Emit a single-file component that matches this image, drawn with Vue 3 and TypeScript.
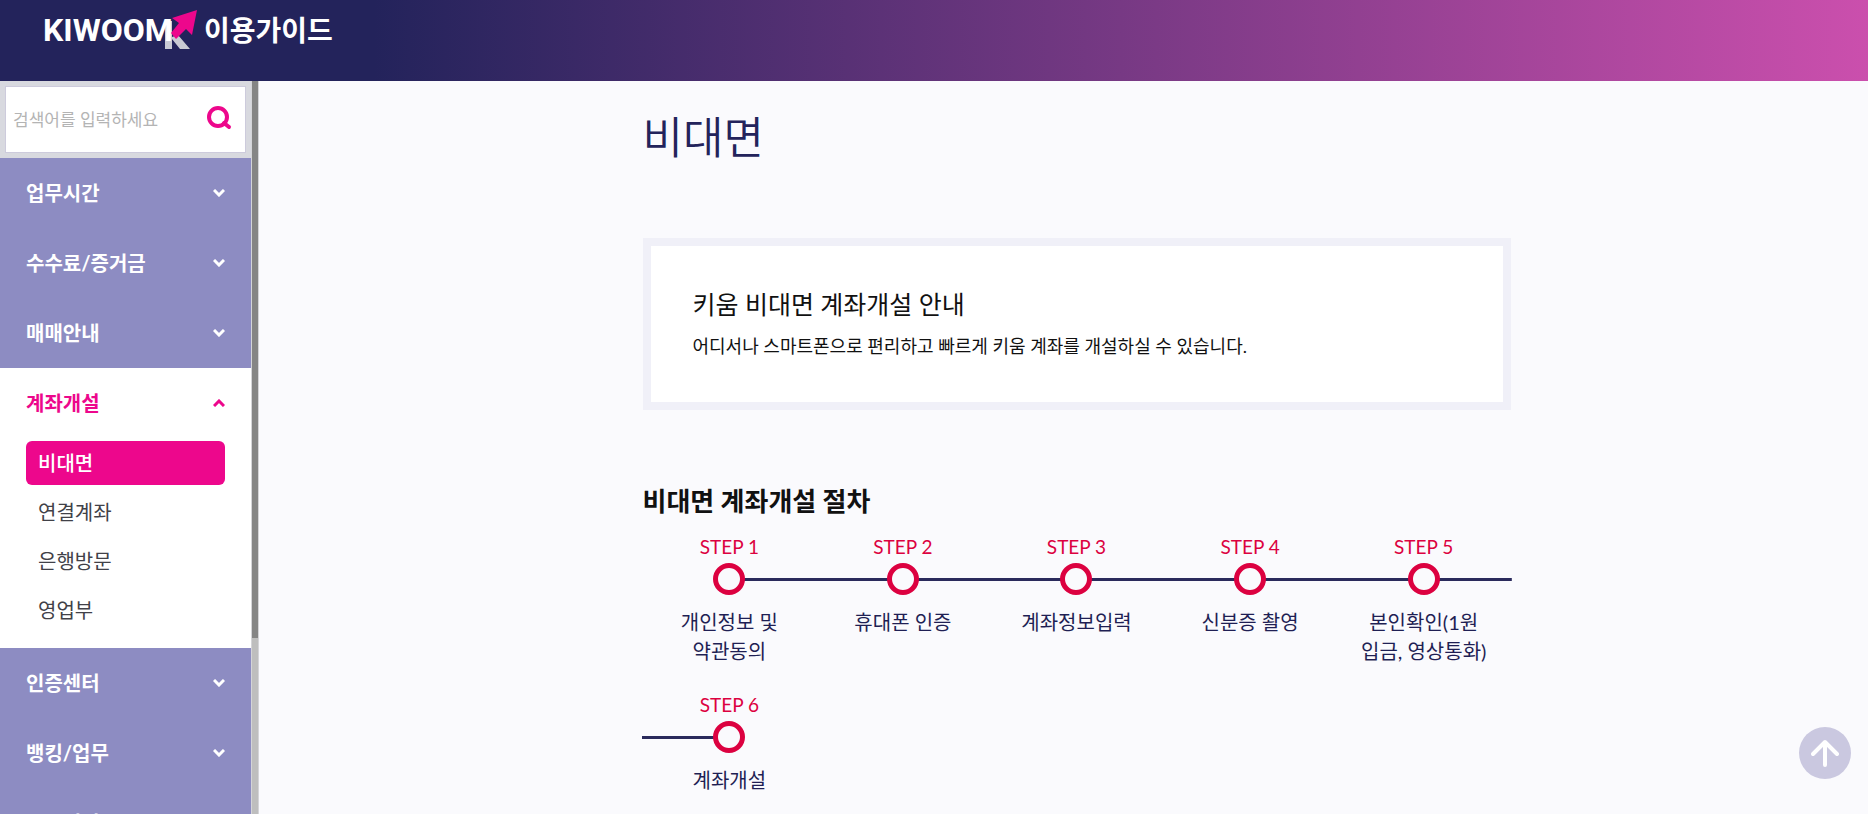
<script setup lang="ts">
import { ref } from 'vue'

interface Section {
  title: string
  children?: string[]
}

const sections: Section[] = [
  { title: '업무시간' },
  { title: '수수료/증거금' },
  { title: '매매안내' },
  { title: '계좌개설', children: ['비대면', '연결계좌', '은행방문', '영업부'] },
  { title: '인증센터' },
  { title: '뱅킹/업무' },
  { title: '주요서비스' },
]

const steps: string[] = [
  '개인정보 및 약관동의',
  '휴대폰 인증',
  '계좌정보입력',
  '신분증 촬영',
  '본인확인(1원 입금, 영상통화)',
  '계좌개설',
]

const keyword = ref('')
const opened = ref('계좌개설')
const current = ref('비대면')

function toggle(section: Section) {
  opened.value = opened.value === section.title ? '' : section.title
}
</script>

<template>
  <div class="page">
    <header class="top">
      <a class="brand" href="#" aria-label="KIWOOM 이용가이드">
        <svg class="logo" viewBox="0 0 156 44" aria-hidden="true">
          <path d="M121 13h7v16l6-2 12 14h-10l-8-10v10h-7z" fill="#c9cad4" />
          <text class="wordmark" x="-1" y="33">KIWOOM</text>
          <path d="M153 2l-5 25-6-6-10 10-5-6 8-10-7-5z" fill="#ed078c" />
        </svg>
        <span class="guide">이용가이드</span>
      </a>
    </header>

    <div class="body">
      <aside class="side">
        <div class="side-content">
          <form class="search" role="search" @submit.prevent>
            <div class="search-box">
              <input v-model="keyword" type="text" aria-label="검색어" placeholder="검색어를 입력하세요" />
              <button type="submit" aria-label="검색">
                <svg viewBox="0 0 26 26" fill="none" stroke="#ed078c" stroke-width="4">
                  <circle cx="12" cy="13" r="9" />
                  <path d="M18 19l5 4" stroke-linecap="round" />
                </svg>
              </button>
            </div>
          </form>
          <nav>
            <section
              v-for="s in sections"
              :key="s.title"
              class="group"
              :class="{ open: opened === s.title }"
            >
              <button class="group-title" type="button" :aria-expanded="opened === s.title" @click="toggle(s)">
                <span>{{ s.title }}</span>
                <svg viewBox="0 0 12 8" fill="none" stroke="currentColor" stroke-width="3">
                  <path v-if="opened === s.title" d="M1 7l5-5 5 5" />
                  <path v-else d="M1 1l5 5 5-5" />
                </svg>
              </button>
              <ul v-if="s.children && opened === s.title">
                <li v-for="c in s.children" :key="c">
                  <a href="#" :class="{ active: current === c }" @click.prevent="current = c">{{ c }}</a>
                </li>
              </ul>
            </section>
          </nav>
        </div>
        <div class="track"><div class="thumb"></div></div>
      </aside>

      <main>
        <article>
          <h1>비대면</h1>
          <section class="notice">
            <h2>키움 비대면 계좌개설 안내</h2>
            <p>어디서나 스마트폰으로 편리하고 빠르게 키움 계좌를 개설하실 수 있습니다.</p>
          </section>
          <h2 class="steps-title">비대면 계좌개설 절차</h2>
          <ol class="steps">
            <li v-for="(label, i) in steps" :key="label">
              <span class="step-no">STEP {{ i + 1 }}</span>
              <span class="rail"><span class="dot"></span></span>
              <span class="label">{{ label }}</span>
            </li>
          </ol>
        </article>
      </main>
    </div>

    <button class="to-top" type="button" aria-label="맨 위로">
      <svg viewBox="0 0 28 28" fill="none" stroke="#fff" stroke-width="4" stroke-linecap="round" stroke-linejoin="round">
        <path d="M14 26V3M2 15L14 3l12 12" />
      </svg>
    </button>
  </div>
</template>

<style>
body {
  margin: 0;
  background: #fafafd;
}
</style>

<style scoped>
.page {
  display: flex;
  flex-direction: column;
  height: 100vh;
  overflow: hidden;
  font-family: Lato, 'Noto Sans CJK KR', sans-serif;
  font-size: 20px;
  color: #111;
  word-break: keep-all;
}
.page * {
  box-sizing: border-box;
}
button,
input {
  border: 0;
  padding: 0;
  background: none;
  font: inherit;
  color: inherit;
}
button {
  cursor: pointer;
}
a {
  color: inherit;
  text-decoration: none;
}
ul,
ol {
  list-style: none;
  margin: 0;
  padding: 0;
}
.top {
  flex: none;
  height: 81px;
  padding: 8px 44px;
  background: linear-gradient(90deg, #23235b 20%, #cb4fad 100%);
}
.brand {
  display: inline-flex;
  align-items: center;
  gap: 4px;
  color: #fff;
}
.logo {
  width: 156px;
  height: 44px;
}
.wordmark {
  font: bold 32px Roboto, sans-serif;
  fill: #fff;
}
.guide {
  font-size: 28px;
  font-weight: 700;
  line-height: 44px;
}
.body {
  display: flex;
  flex: 1;
  min-height: 0;
}
.side {
  display: flex;
  flex: none;
  width: 259px;
  overflow: hidden;
}
.side-content {
  flex: 1;
  min-width: 0;
}
.search {
  padding: 5px;
  background: #d8d9df;
}
.search-box {
  display: flex;
  align-items: center;
  height: 67px;
  padding: 0 13px 0 7px;
  border: 1px solid #cdcbdc;
  background: #fff;
}
.search-box input {
  flex: 1;
  min-width: 0;
  font-size: 17px;
  outline: 0;
}
.search-box input::placeholder {
  color: #b4b4b4;
  opacity: 1;
}
.search-box button {
  flex: none;
  padding-bottom: 6px;
}
.search-box svg {
  display: block;
  width: 26px;
  height: 26px;
}
.group {
  background: #8d8cc2;
  color: #fff;
}
.group.open {
  background: #fff;
  color: #ed078c;
}
.group-title {
  display: flex;
  align-items: center;
  justify-content: space-between;
  width: 100%;
  height: 70px;
  padding: 0 26px;
  font-weight: 700;
}
.group-title span {
  padding-bottom: 2px;
}
.group-title svg {
  width: 12px;
  height: 8px;
}
.group ul {
  display: grid;
  gap: 5px;
  padding: 3px 26px 16px;
}
.group li a {
  display: block;
  padding: 0 12px;
  border-radius: 6px;
  line-height: 44px;
  color: #414148;
}
.group li a.active {
  background: #ed078c;
  font-weight: 500;
  color: #fff;
}
.track {
  flex: none;
  width: 8px;
  background: #bebebe;
  border: solid #d4d4d8;
  border-width: 0 1px;
}
.thumb {
  height: 76%;
  background: #858585;
}
main {
  flex: 1;
  padding: 0 0 0 26px;
}
article {
  max-width: 868px;
  margin: 0 auto;
}
h1 {
  margin: 24px 0 69px;
  font-size: 44px;
  font-weight: 350;
  line-height: 64px;
  color: #23235b;
}
.notice {
  padding: 39px 42px 41px;
  border: 8px solid #f0f0f8;
  background: #fff;
}
h2 {
  margin: 0;
  font-size: 26px;
  line-height: 38px;
}
.notice h2 {
  font-size: 25px;
  font-weight: 400;
}
.notice p {
  margin: 8px 0 0;
  font-size: 18px;
  line-height: 30px;
}
.steps-title {
  margin-top: 72px;
  font-weight: 700;
}
.steps {
  display: grid;
  grid-template-columns: repeat(5, 1fr);
  row-gap: 27px;
  margin-top: 15px;
  text-align: center;
  color: #1f1f54;
}
.step-no {
  display: block;
  margin-bottom: 4px;
  font-size: 19px;
  line-height: 24px;
  color: #dc0140;
}
.rail {
  display: flex;
  justify-content: center;
  margin: 0 -1px;
  background: linear-gradient(#2a2a5c, #2a2a5c) center / 100% 3px no-repeat;
}
.steps li:first-child .rail {
  background-position: right center;
  background-size: 50% 3px;
}
.steps li:last-child .rail {
  background-position: left center;
  background-size: 50% 3px;
}
.dot {
  width: 32px;
  height: 32px;
  border: 5px solid #dc0140;
  border-radius: 50%;
  background: #fafafd;
}
.label {
  display: block;
  padding: 13px 18px 0;
  line-height: 29px;
}
.to-top {
  position: fixed;
  right: 17px;
  bottom: 35px;
  display: grid;
  place-items: center;
  width: 52px;
  height: 52px;
  border-radius: 50%;
  background: #cac8e0;
}
.to-top svg {
  width: 28px;
  height: 28px;
}
</style>
